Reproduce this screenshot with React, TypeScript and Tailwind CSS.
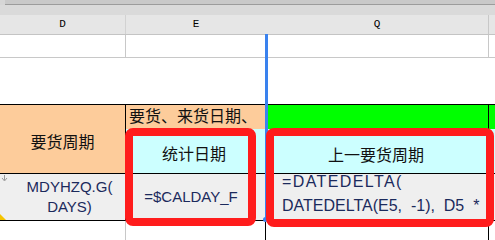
import React from 'react';

const cjk = '"Noto Sans CJK SC", "Noto Sans", sans-serif';
const latin = '"Liberation Sans", Arial, sans-serif';

const App: React.FC = () => {
  return (
    <div className="relative w-[495px] h-[240px] overflow-hidden bg-white" style={{ fontFamily: latin }}>
      {/* window chrome strips */}
      <div className="flex h-[5px]">
        <div className="w-[5px] bg-[#d6d6d6]"></div>
        <div className="flex-1 bg-[#c9c9c9] border-b border-[#9c9c9c]"></div>
      </div>
      <div className="h-[10px] bg-[#dadada]"></div>

      {/* column headers */}
      <div className="flex h-[20px] bg-[#e6e6e6] border-b border-[#c4c4c4] text-[11px] text-black" style={{ fontFamily: '"Liberation Mono", monospace' }}>
        <div className="w-[126px] border-r border-[#d2d2d2] flex items-center justify-center">D</div>
        <div className="w-[140px] flex items-center justify-center">E</div>
        <div className="w-[223px] border-r border-[#c8c8c8] flex items-center justify-center">Q</div>
        <div className="flex-1"></div>
      </div>

      {/* empty row */}
      <div className="flex h-[23px] border-b border-[#c8c8c8]">
        <div className="w-[126px] border-r border-[#c8c8c8]"></div>
        <div className="w-[363px] border-r border-[#c8c8c8]"></div>
        <div className="flex-1"></div>
      </div>
      <div className="h-[46px]"></div>

      {/* title row */}
      <div className="flex h-[69px] border-t border-black text-[16px] text-[#111]" style={{ fontFamily: cjk }}>
        <div className="w-[126px] border-r border-black bg-[#fdcc9b] flex items-center justify-center pt-[4px]">要货周期</div>
        <div className="w-[140px] flex flex-col">
          <div className="h-[24px] bg-[#fdcc9b] overflow-hidden pl-[3px] leading-[21px]">要货、来货日期、统计日期</div>
          <div className="flex-1 bg-[#ccffff] flex items-center justify-center pt-[4px] pr-[4px]">统计日期</div>
        </div>
        <div className="w-[223px] border-r border-black flex flex-col">
          <div className="h-[24px] bg-[#00ff00]"></div>
          <div className="flex-1 bg-[#ccffff] flex items-center justify-center pt-[6px] pr-[2px]">上一要货周期</div>
        </div>
        <div className="flex-1 flex flex-col">
          <div className="h-[24px] bg-[#00ff00]"></div>
          <div className="flex-1 bg-[#ccffff]"></div>
        </div>
      </div>

      {/* formula row */}
      <div className="relative flex h-[48px] border-y border-black bg-[#efefef] text-[15px] text-[#1b2a5c]">
        <div className="relative w-[126px] border-r border-black flex flex-col items-center justify-center leading-[20px] pl-[14px]">
          <span>MDYHZQ.G(</span>
          <span>DAYS)</span>
          <svg className="absolute left-[1px] top-[1px]" width="7" height="7" viewBox="0 0 7 7">
            <path d="M3.5 0v5M1 3l2.5 3L6 3" stroke="#9a9a9a" strokeWidth="1" fill="none" />
          </svg>
          <svg className="absolute left-0 bottom-0" width="6" height="6" viewBox="0 0 6 6">
            <path d="M0 0L6 6H0Z" fill="#f5c400" />
          </svg>
        </div>
        <div className="w-[140px] flex items-center justify-center pr-[10px] pt-[1px]">=$CALDAY_F</div>
        <div className="w-[223px] border-r border-black flex flex-col justify-center pl-[16px] leading-[24px] text-[16px] pb-[6px]">
          <span className="tracking-[1.4px]">=DATEDELTA(</span>
          <span className="whitespace-pre">DATEDELTA(E5,  -1),  D5  *</span>
        </div>
        <div className="flex-1"></div>
      </div>

      {/* lines below */}
      <div className="flex h-[30px]">
        <div className="w-[126px] border-r border-[#c8c8c8]"></div>
        <div className="w-[140px] border-r border-black"></div>
        <div className="w-[223px] border-r border-black"></div>
      </div>

      {/* selected column edge */}
      <div className="absolute left-[265px] top-[34px] w-[3px] h-[185px] bg-[#3a82ee]"></div>
      <div className="absolute left-[263px] top-[217px] w-[5px] h-[5px] rounded-full bg-[#3a82ee]"></div>

      {/* highlight boxes */}
      <div className="absolute left-[125px] top-[128px] w-[131px] h-[98px] border-[8px] border-[#ff1c1c] rounded-[8px]"></div>
      <div className="absolute left-[266px] top-[128px] w-[228px] h-[99px] border-[8px] border-[#ff1c1c] rounded-[8px]"></div>
    </div>
  );
};

export default App;
